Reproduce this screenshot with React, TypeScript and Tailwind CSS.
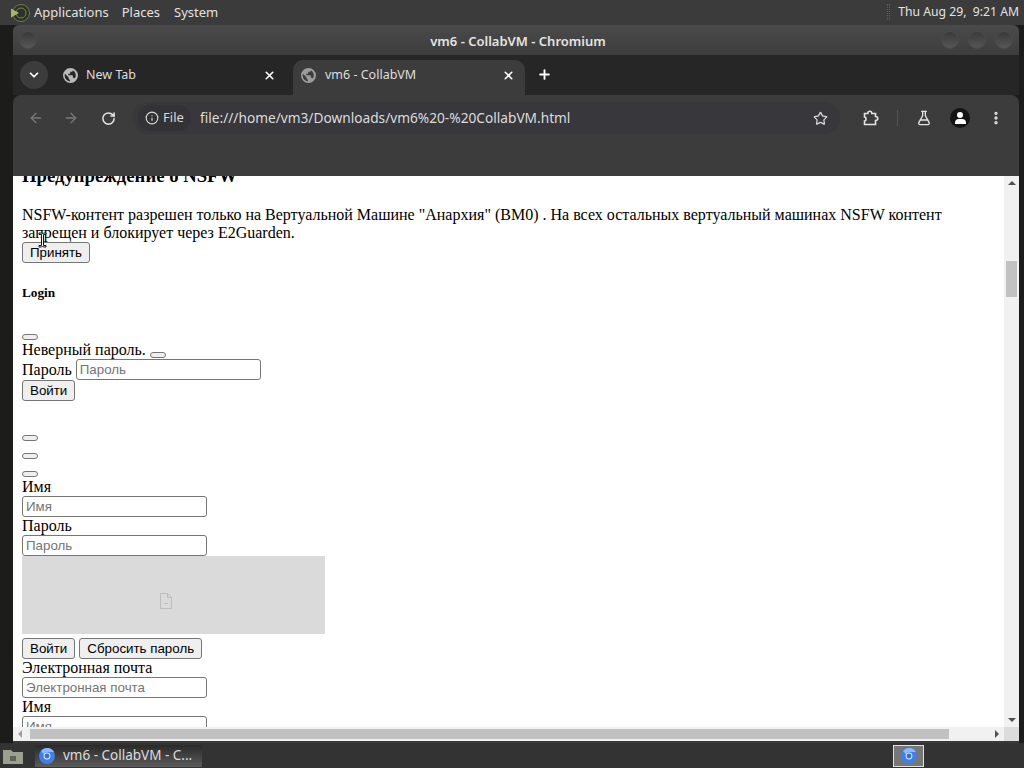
import { ArrowLeft, ArrowRight, ChevronDown, EllipsisVertical, FlaskConical, Info, Plus, RotateCw, Star, X } from "lucide-react";

const Globe = ({ className }: { className: string }) => (
  <svg viewBox="0 0 16 16" className={className} fill="currentColor">
    <path d="M8 0a8 8 0 1 0 0 16A8 8 0 0 0 8 0ZM1.8 8c0-.6.1-1.2.3-1.8L6 10v1c0 .8.6 1.4 1.4 1.4v1.8A6.2 6.2 0 0 1 1.8 8Zm10.7 3.3c-.2-.5-.7-.9-1.3-.9h-.7V8.300c0-.4-.3-.7-.7-.7H5.600V6.200H7c.4 0 .7-.3.7-.7V4.100h1.400c.8 0 1.400-.6 1.400-1.400v-.3a6.200 6.200 0 0 1 2 8.900Z" />
  </svg>
);

const ChromiumIcon = () => (
  <svg viewBox="0 0 16 16" className="h-4 w-4">
    <circle cx="8" cy="8" r="8" fill="#3f7fe8" />
    <path d="M8 0a8 8 0 0 1 7 4H8a4 4 0 0 0-3.500 2L2 2.900A8 8 0 0 1 8 0Z" fill="#8fb8f5" />
    <circle cx="8" cy="8" r="3.400" fill="#dce9fb" />
    <circle cx="8" cy="8" r="2.400" fill="#2f6fe0" />
  </svg>
);

const WinButton = () => (
  <div className="h-[18px] w-[18px] rounded-full border border-[#4c4c4c] bg-gradient-to-b from-[#3a3a3a] to-[#565656]" />
);

const NativeButton = ({ children }: { children: string }) => (
  <button className="h-[21px] rounded-[3px] border border-[#767676] bg-[#efefef] px-[7px] font-['Liberation_Sans',sans-serif] text-[13.33px] leading-none text-black">
    {children}
  </button>
);

const EmptyButton = ({ className = "" }: { className?: string }) => (
  <button className={`h-[6px] w-4 rounded-[3px] border border-[#767676] bg-[#efefef] ${className}`} />
);

const NativeInput = ({ placeholder }: { placeholder: string }) => (
  <input
    readOnly
    placeholder={placeholder}
    className="block h-[21px] w-[185px] rounded-[3px] border border-[#767676] bg-white px-[3px] font-['Liberation_Sans',sans-serif] text-[13.33px] placeholder:text-[#757575]"
  />
);

const Page = () => (
  <div className="relative -mt-[11px] h-[600px] overflow-hidden pl-[9px] font-['Liberation_Serif','DejaVu_Serif',serif] text-base leading-[18px] text-black">
    <h3 className="h-[22px] text-[18.72px] font-bold leading-[22px]">Предупреждение о NSFW</h3>
    <p className="mt-[19px]">
      NSFW-контент разрешен только на Вертуальной Машине "Анархия" (ВМ0) . На всех остальных вертуальный машинах NSFW контент запрещен и блокирует через E2Guarden.
    </p>
    <NativeButton>Принять</NativeButton>
    <h5 className="mt-[22px] h-[15px] text-[13.28px] font-bold leading-[15px]">Login</h5>
    <EmptyButton className="mt-[34px] block" />
    <div className="mt-px flex h-[18px] items-start">
      <span>Неверный пароль.</span>
      <EmptyButton className="ml-1 mt-[11px]" />
    </div>
    <div className="flex h-[21px] items-center">
      <span>Пароль</span>
      <span className="ml-1">
        <NativeInput placeholder="Пароль" />
      </span>
    </div>
    <NativeButton>Войти</NativeButton>
    <EmptyButton className="mt-[34px] block" />
    <EmptyButton className="mt-3 block" />
    <EmptyButton className="mt-3 block" />
    <div className="mt-px">Имя</div>
    <NativeInput placeholder="Имя" />
    <div>Пароль</div>
    <NativeInput placeholder="Пароль" />
    <div className="flex h-[78px] w-[303px] items-center justify-center bg-[#dadada] pr-[15px] pt-[11px]">
      <svg viewBox="0 0 14 16" className="h-4 w-[14px] text-[#bdbdbd]" fill="none" stroke="currentColor">
        <path d="M1.500.500h7l4 4v11h-11zM8.500.500v4h4M5 10.500h4" />
      </svg>
    </div>
    <div className="mt-1 flex gap-1">
      <NativeButton>Войти</NativeButton>
      <NativeButton>Сбросить пароль</NativeButton>
    </div>
    <div>Электронная почта</div>
    <NativeInput placeholder="Электронная почта" />
    <div>Имя</div>
    <NativeInput placeholder="Имя" />
    {/* mouse pointer left over the page */}
    <svg viewBox="0 0 9 16" className="absolute left-[25px] top-[67px] h-4 w-[9px]">
      <path d="M1 1h2.500l1 1 1-1H8v1.500H5.500v11H8V15H5.500l-1-1-1 1H1v-1.500h2.500v-11H1z" fill="#ffffff" stroke="#111111" strokeWidth="1" />
    </svg>
  </div>
);

export default function App() {
  return (
    <div className="flex h-[768px] w-[1024px] flex-col overflow-hidden bg-[#1c1d1b] font-['Noto_Sans',sans-serif]">
      {/* gnome panel */}
      <div className="flex h-[25px] shrink-0 items-center bg-[#3b3b3b] text-[13px] text-[#e2e2e2]">
        <svg viewBox="0 0 20 20" className="ml-[10px] h-[20px] w-[20px]">
          <circle cx="11" cy="10" r="8.500" fill="#2c3226" stroke="#6f7a4c" strokeWidth="1" />
          <circle cx="11" cy="10" r="5" fill="none" stroke="#7b8456" strokeWidth="1" />
          <path d="M1 5.500 9 10l-8 4.500z" fill="#a3b56e" />
        </svg>
        <span className="ml-1">Applications</span>
        <span className="ml-[13px]">Places</span>
        <span className="ml-[14px]">System</span>
        <div className="ml-auto mr-[5px] flex items-center">
          <div className="mr-[8px] h-[16px] w-[3px] border-x border-dotted border-[#5c5c5c]" />
          <span className="text-[12.2px]">Thu Aug 29,&nbsp; 9:21 AM</span>
        </div>
      </div>

      <div className="flex h-[718px] shrink-0 pl-[13px] pr-[5px]">
        {/* chromium window */}
        <div className="flex min-w-0 flex-1 flex-col">
          <div className="flex h-[30px] shrink-0 items-center justify-between rounded-t-md bg-gradient-to-b from-[#4a4a4a] to-[#3d3d3d] px-[6px]">
            <div className="w-[72px]">
              <WinButton />
            </div>
            <span className="ml-[4px] pt-[3px] text-[13px] font-semibold text-[#e4e4e4]">vm6 - CollabVM - Chromium</span>
            <div className="flex gap-[9px]">
              <WinButton />
              <WinButton />
              <WinButton />
            </div>
          </div>

          <div className="flex h-[40px] shrink-0 items-end bg-[#262626] text-[12.5px] text-[#dedede]">
            <div className="mb-[6px] ml-[7px] flex h-[28px] w-[28px] items-center justify-center rounded-full bg-[#3c3c3c]">
              <ChevronDown size={14} strokeWidth={3} className="text-white" />
            </div>
            <div className="flex h-[35px] w-[230px] items-center pb-[4px] pl-[15px] pr-[2px]">
              <Globe className="h-[15px] w-[15px] text-[#b9b9b9]" />
              <span className="ml-[8px]">New Tab</span>
              <X size={13} strokeWidth={3} className="ml-auto text-white" />
            </div>
            <div className="ml-[15px] flex h-[35px] w-[232px] items-center rounded-t-[10px] bg-[#3c3c3c] pb-[4px] pl-[8px] pr-[10px]">
              <Globe className="h-[15px] w-[15px] text-[#9c9c9c]" />
              <span className="ml-[9px]">vm6 - CollabVM</span>
              <X size={13} strokeWidth={3} className="ml-auto text-white" />
            </div>
            <Plus size={15} strokeWidth={3} className="mb-[13px] ml-[12px] text-white" />
          </div>

          <div className="h-[81px] shrink-0 rounded-t-[8px] bg-[#3c3c3c] pt-[7px]">
            <div className="flex h-[32px] items-center text-[#d8d8d8]">
              <ArrowLeft size={16} strokeWidth={2} className="ml-[15px] text-[#777777]" />
              <ArrowRight size={16} strokeWidth={2} className="ml-[19px] text-[#777777]" />
              <RotateCw size={15} strokeWidth={2.4} className="ml-[22px] text-[#e4e4e4]" />
              <div className="ml-[17px] flex h-[32px] w-[707px] items-center rounded-full bg-[#37373c] pl-[5px]">
                <div className="flex h-[26px] w-[53px] items-center justify-center gap-[4px] rounded-full bg-[#333336] text-[13px]">
                  <Info size={14} strokeWidth={2} />
                  <span>File</span>
                </div>
                <span className="ml-[9px] text-[13.7px] text-[#dcdcdc]">file:///home/vm3/Downloads/vm6%20-%20CollabVM.html</span>
                <Star size={15} strokeWidth={2} className="ml-auto mr-[12px] text-[#d8d8d8]" />
              </div>
              <svg viewBox="0 0 16 16" className="ml-[23px] h-4 w-4 text-[#e4e4e4]" fill="none" stroke="currentColor" strokeWidth="1.600">
                <path d="M1.500 3.500h3.300c0-3 4-3 4 0h3.700v3c3 0 3 4 0 4v4h-11v-3.500c2 0 2-4 0-4z" />
              </svg>
              <div className="ml-[18px] h-[16px] w-px bg-[#555555]" />
              <FlaskConical size={16} strokeWidth={2} className="ml-[18px] text-[#e4e4e4]" />
              <div className="relative ml-[18px] flex h-[20px] w-[20px] items-center justify-center overflow-hidden rounded-full bg-[#141414]">
                <div className="absolute top-[4px] h-[6px] w-[6px] rounded-full bg-white" />
                <div className="absolute top-[11px] h-[5px] w-[11px] rounded-t-[4px] bg-white" />
              </div>
              <EllipsisVertical size={16} strokeWidth={3} className="ml-[18px] text-[#e4e4e4]" />
            </div>
          </div>

          {/* page viewport, scrolled */}
          <div className="flex h-[565px] shrink-0 flex-col bg-white">
            <div className="flex min-h-0 flex-1">
              <div className="min-w-0 flex-1 overflow-hidden">
                <Page />
              </div>
              <div className="flex w-[15px] shrink-0 flex-col items-center bg-[#f1f1f1]">
                <div className="mt-[5px] h-0 w-0 border-x-[4px] border-b-[4px] border-x-transparent border-b-[#505050]" />
                <div className="mt-[76px] h-[36px] w-[11px] bg-[#c1c1c1]" />
                <div className="mb-[5px] mt-auto h-0 w-0 border-x-[4px] border-t-[4px] border-x-transparent border-t-[#505050]" />
              </div>
            </div>
            <div className="flex h-[14px] shrink-0 items-center bg-[#f1f1f1]">
              <div className="ml-[5px] h-0 w-0 border-y-[4px] border-r-[4px] border-y-transparent border-r-[#a0a0a0]" />
              <div className="ml-[8px] h-[10px] w-[919px] bg-[#c1c1c1]" />
              <div className="ml-[46px] h-0 w-0 border-y-[4px] border-l-[4px] border-y-transparent border-l-[#505050]" />
              <div className="ml-auto h-full w-[15px] bg-[#dcdcdc]" />
            </div>
          </div>
          <div className="h-[2px] shrink-0 bg-[#3a3a3a]" />
        </div>
      </div>

      {/* taskbar */}
      <div className="flex h-[25px] shrink-0 items-center bg-[#333333]">
        <svg viewBox="0 0 22 18" className="ml-[2px] h-[18px] w-[22px]">
          <path d="M1 3h8l2 2h10v12H1z" fill="#9ba08f" />
          <rect x="8" y="9" width="6" height="5" fill="#5f6357" />
        </svg>
        <div className="ml-[11px] flex h-[22px] w-[167px] items-center bg-gradient-to-b from-[#2a2a2a] to-[#5c5c5c] pl-[4px] text-[13.5px] text-[#dcdcdc]">
          <ChromiumIcon />
          <span className="ml-[8px] whitespace-nowrap">vm6 - CollabVM - C...</span>
        </div>
        <div className="ml-[691px] flex h-[22px] w-[31px] items-center justify-center border border-[#e0e0e0] bg-[#777777]">
          <ChromiumIcon />
        </div>
      </div>
    </div>
  );
}
